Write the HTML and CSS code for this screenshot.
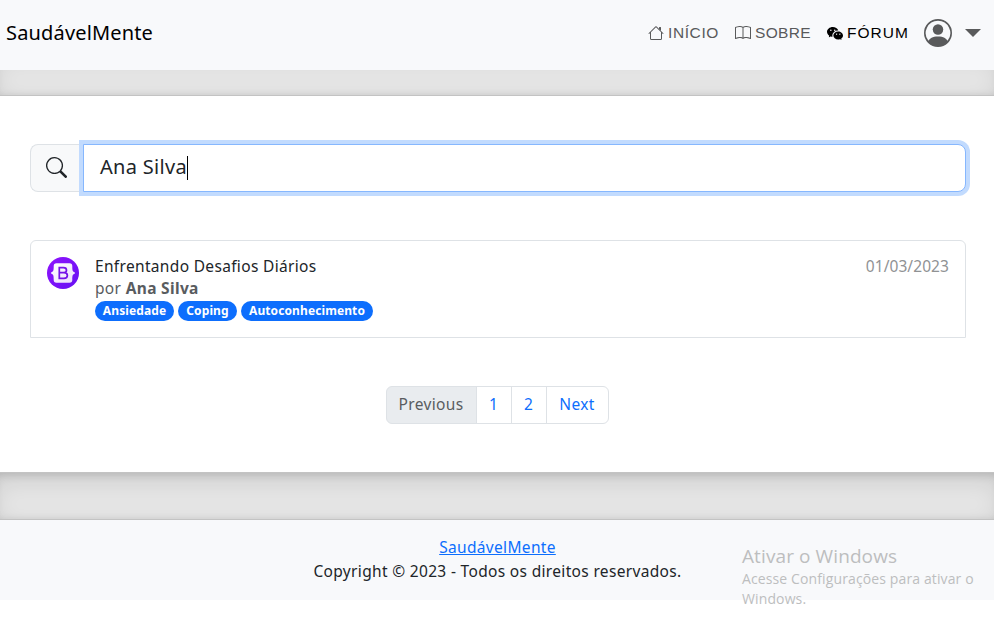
FILE: index.html
```html
<!DOCTYPE html>
<html lang="pt-BR">
<head>
<meta charset="utf-8">
<title>SaudávelMente</title>
<link rel="stylesheet" href="styles.css">
</head>
<body>
<header class="navbar">
  <a class="brand">SaudávelMente</a>
  <nav class="nav">
    <a class="nav-link"><svg width="16" height="16" viewBox="0 0 16 16" fill="currentColor"><path d="M2 13.5V7h1v6.500a.5.5 0 0 0 .5.5h9a.5.5 0 0 0 .5-.5V7h1v6.500a1.500 1.500 0 0 1-1.500 1.500h-9A1.500 1.500 0 0 1 2 13.500zm11-11V6l-2-2V2.500a.5.5 0 0 1 .5-.5h1a.5.5 0 0 1 .5.5z"/><path d="M7.293 1.500a1 1 0 0 1 1.414 0l6.647 6.646a.5.5 0 0 1-.708.708L8 2.207 1.354 8.854a.5.5 0 1 1-.708-.708z"/></svg><span class="t-inicio">INÍCIO</span></a>
    <a class="nav-link"><svg width="16" height="16" viewBox="0 0 16 16" fill="currentColor"><path d="M1 2.828c.885-.37 2.154-.769 3.388-.893 1.330-.134 2.458.063 3.112.752v9.746c-.935-.53-2.120-.603-3.213-.493-1.180.12-2.370.461-3.287.811zm7.500-.141c.654-.689 1.782-.886 3.112-.752 1.234.124 2.503.523 3.388.893v9.923c-.918-.35-2.107-.692-3.287-.81-1.094-.111-2.278-.039-3.213.492zM8 1.783C7.015.936 5.587.81 4.287.94c-1.514.153-3.042.672-3.994 1.105A.5.5 0 0 0 0 2.500v11a.5.5 0 0 0 .707.455c.882-.4 2.303-.881 3.680-1.020 1.409-.142 2.590.087 3.223.877a.5.5 0 0 0 .78 0c.633-.79 1.814-1.019 3.222-.877 1.378.139 2.800.62 3.681 1.020A.5.5 0 0 0 16 13.500v-11a.5.5 0 0 0-.293-.455c-.952-.433-2.480-.952-3.994-1.105C10.413.809 8.985.936 8 1.783z"/></svg><span class="t-sobre">SOBRE</span></a>
    <a class="nav-link active"><svg width="16" height="16" viewBox="0 0 16 16" fill="currentColor"><path d="M11.176 14.429c-2.665 0-4.826-1.800-4.826-4.018 0-2.220 2.159-4.020 4.824-4.020S16 8.191 16 10.411c0 1.210-.65 2.301-1.666 3.036a.324.324 0 0 0-.12.366l.218.81a.616.616 0 0 1 .029.117.166.166 0 0 1-.162.162.177.177 0 0 1-.092-.03l-1.057-.61a.519.519 0 0 0-.256-.074.509.509 0 0 0-.142.021 5.668 5.668 0 0 1-1.576.220ZM9.064 9.542a.647.647 0 1 0 .557-1 .645.645 0 0 0-.646.647.615.615 0 0 0 .09.353Zm3.232.001a.646.646 0 1 0 .546-1 .645.645 0 0 0-.644.644.627.627 0 0 0 .098.356Z"/><path d="M0 6.826c0 1.455.781 2.765 2.001 3.656a.385.385 0 0 1 .143.439l-.161.6-.1.373a.499.499 0 0 0-.032.14.192.192 0 0 0 .193.193c.039 0 .077-.01.111-.029l1.268-.733a.622.622 0 0 1 .308-.088c.058 0 .116.009.171.025a6.830 6.830 0 0 0 1.625.26 4.450 4.450 0 0 1-.177-1.251c0-2.936 2.785-5.020 5.824-5.020.05 0 .1 0 .15.002C10.587 3.429 8.392 2 5.796 2 2.596 2 0 4.160 0 6.826Zm4.632-1.555a.77.77 0 1 1-1.540 0 .77.77 0 0 1 1.540 0Zm3.875 0a.77.77 0 1 1-1.540 0 .77.77 0 0 1 1.540 0Z"/></svg><span class="t-forum">FÓRUM</span></a>
    <a class="profile"><svg width="28" height="28" viewBox="0 0 16 16" fill="currentColor"><path d="M11 6a3 3 0 1 1-6 0 3 3 0 0 1 6 0z"/><path fill-rule="evenodd" d="M0 8a8 8 0 1 1 16 0A8 8 0 0 1 0 8zm8-7a7 7 0 0 0-5.468 11.370C3.242 11.226 4.805 10 8 10s4.757 1.225 5.468 2.370A7 7 0 0 0 8 1z"/></svg><i class="chevron"></i></a>
  </nav>
</header>
<div class="divider divider-top"></div>
<main class="content">
  <div class="search">
    <div class="search-icon"><svg width="21" height="21" viewBox="0 0 16 16" fill="currentColor"><path d="M11.742 10.344a6.500 6.500 0 1 0-1.397 1.398h-.001c.03.04.062.078.098.115l3.850 3.850a1 1 0 0 0 1.415-1.414l-3.850-3.850a1.007 1.007 0 0 0-.115-.1zM12 6.500a5.500 5.500 0 1 1-11 0 5.500 5.500 0 0 1 11 0z"/></svg></div>
    <div class="search-input" role="textbox"><span class="query">Ana Silva</span><i class="caret"></i></div>
  </div>
  <article class="post">
    <svg class="avatar" width="32" height="32" viewBox="0 0 32 32">
      <defs><linearGradient id="violet" x1="0" y1="0" x2="1" y2="1"><stop offset="0" stop-color="#9013fe"/><stop offset="1" stop-color="#6610f2"/></linearGradient><linearGradient id="pale" x1="0" y1="0" x2="1" y2="1"><stop offset="0" stop-color="#fff"/><stop offset="1" stop-color="#eadcfb"/></linearGradient></defs>
      <circle cx="16" cy="16" r="16" fill="url(#violet)"/>
      <path fill="url(#pale)" d="M9.500 6.300h13a2.800 2.800 0 0 1 2.800 2.900c0 2.800-.1 5.600 2.500 6v1.600c-2.600.4-2.500 3.200-2.500 6a2.800 2.800 0 0 1-2.800 2.900h-13a2.800 2.800 0 0 1-2.800-2.900c0-2.800.1-5.600-2.500-6v-1.600c2.600-.4 2.500-3.200 2.500-6a2.800 2.800 0 0 1 2.800-2.900z"/>
      <path fill="none" stroke="#7512e8" stroke-width="1.700" d="M12.300 10.600h4.200c4 0 4 5.100 0 5.100h-4.200h4.700c4.500 0 4.500 5.700 0 5.700h-4.700z"/>
    </svg>
    <div class="post-body">
      <h6 class="post-title">Enfrentando Desafios Diários</h6>
      <p class="author"><span class="by">por</span> <b>Ana Silva</b></p>
      <div class="badges"><span class="badge b1">Ansiedade</span><span class="badge b2">Coping</span><span class="badge b3">Autoconhecimento</span></div>
    </div>
    <time class="date">01/03/2023</time>
  </article>
  <ul class="pagination">
    <li class="page prev">Previous</li><li class="page num">1</li><li class="page num">2</li><li class="page next">Next</li>
  </ul>
</main>
<div class="divider"></div>
<footer class="footer">
  <a class="footer-link">SaudávelMente</a>
  <p class="copyright">Copyright © 2023 - Todos os direitos reservados.</p>
</footer>
<aside class="watermark">
  <div class="wm-title">Ativar o Windows</div>
  <div class="wm-text">Acesse Configurações para ativar o<br>Windows.</div>
</aside>
</body>
</html>
```
FILE: styles.css
```css
* { box-sizing: border-box; }
body {
  margin: 0;
  height: 620px;
  overflow: hidden;
  position: relative;
  background: #fff;
  color: #212529;
  font: 15.5px/24px "Noto Sans", "Open Sans", sans-serif;
  letter-spacing: .33px;
}
svg { display: block; flex: none; }
p, h6, ul { margin: 0; padding: 0; }

.navbar {
  position: relative;
  z-index: 1;
  height: 70px;
  padding: 0 13px 4px 6px;
  display: flex;
  align-items: center;
  justify-content: space-between;
  background: #f8f9fb;
}
.brand { font-size: 20px; color: #000; letter-spacing: .16px; }
.nav { display: flex; align-items: center; gap: 16px; }
.nav-link {
  display: flex;
  align-items: center;
  gap: 4px;
  color: #595a5b;
  font-family: "Liberation Sans", Arial, sans-serif;
  font-size: 15.5px;
  white-space: nowrap;
}
.nav-link.active { color: #000; }
.t-inicio { width: 51px; letter-spacing: .6px; }
.t-sobre { width: 56px; letter-spacing: .35px; }
.t-forum { width: 61px; letter-spacing: 1px; }
.profile { display: flex; align-items: center; gap: 13px; color: #595a5b; }
.chevron { border: 8px solid transparent; border-top-color: #595a5b; border-bottom: 0; }

.divider {
  height: 48px;
  margin: 0 -5px;
  background: rgba(0, 0, 0, .1);
  border: solid rgba(0, 0, 0, .15);
  border-width: 1px 0;
  box-shadow: inset 0 8px 24px rgba(0, 0, 0, .1), inset 0 2px 8px rgba(0, 0, 0, .15);
}
.divider-top { margin-top: -22px; }

.content { height: 376px; padding: 48px 28px 0 30px; }
.search { display: flex; height: 48px; }
.search-icon {
  width: 53px;
  padding: 0 0 2px 15px;
  display: flex;
  align-items: center;
  background: #f8f9fa;
  border: 1px solid #dee2e6;
  border-right: 0;
  border-radius: 8px 0 0 8px;
}
.search-input {
  flex: 1;
  display: flex;
  align-items: center;
  padding-left: 16px;
  background: #fff;
  border: 1px solid #86b7fe;
  border-radius: 0 8px 8px 0;
  box-shadow: 0 0 0 4px #c2dbfe;
  font-size: 20px;
  letter-spacing: .3px;
}
.query { margin-top: -2px; }
.caret { width: 1px; height: 24px; background: #000; }

.post {
  height: 98px;
  margin-top: 48px;
  padding: 15px 16px 16px;
  display: flex;
  gap: 16px;
  border: 1px solid #dee2e6;
  border-radius: 6px 6px 0 0;
}
.avatar { margin-top: 1px; }
.post-body { flex: 1; }
.post-title { font-size: 15.5px; font-weight: 400; line-height: 20px; }
.author { color: #595c5f; }
.badges { display: flex; gap: 4px; margin-top: 1px; }
.badge {
  height: 20px;
  border-radius: 10px;
  background: #0d6efd;
  color: #fff;
  font-size: 12px;
  font-weight: 700;
  line-height: 20px;
  letter-spacing: .1px;
  text-align: center;
  white-space: nowrap;
}
.b1 { width: 79px; }
.b2 { width: 59px; }
.b3 { width: 132px; }
.date { color: #909294; line-height: 20px; letter-spacing: .08px; }

.pagination { display: flex; justify-content: center; margin: 48px 2px 0 0; list-style: none; }
.page {
  height: 38px;
  line-height: 34px;
  text-align: center;
  border: 1px solid #dee2e6;
  color: #0d6efd;
  margin-left: -1px;
}
.prev { width: 91px; margin-left: 0; border-radius: 6px 0 0 6px; background: #e9ecef; color: #595c5f; }
.num { width: 36px; }
.next { width: 63px; border-radius: 0 6px 6px 0; }

.footer { height: 80px; padding: 15px 0 0 1px; text-align: center; background: #f8f9fb; }
.footer-link { color: #0d6efd; text-decoration: underline; }

.watermark {
  position: absolute;
  left: 742px;
  top: 543px;
  color: #bdbebf;
  font-family: "Open Sans", sans-serif;
  white-space: nowrap;
}
.wm-title { font-size: 19px; line-height: 26px; letter-spacing: .1px; }
.wm-text { font-size: 14px; line-height: 20px; letter-spacing: .12px; }
```
